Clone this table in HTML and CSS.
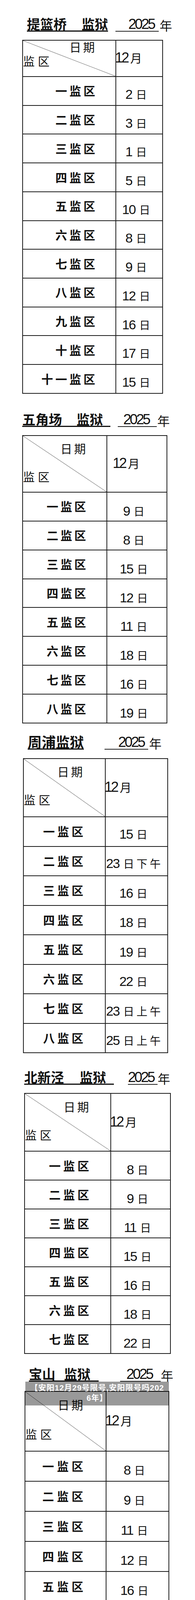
FILE: index.html
```html
<!DOCTYPE html>
<html lang="zh-CN">
<head>
<meta charset="utf-8">
<title>2025年12月 监区日期表</title>
<link rel="stylesheet" href="styles.css">
</head>
<body>

<section class="sec s1">
  <div class="ttl"><span class="nm"><span>提篮桥</span><span class="w2">监狱</span></span><span class="yr">2025</span><span class="nian">年</span></div>
  <div class="tbl">
    <div class="hl"><span class="hq">日期</span><span class="hj">监区</span></div>
    <div class="hr"><span class="m"><span class="n">12</span><span class="c">月</span></span></div>
    <div class="lab">一监区</div><div class="dt"><p class="dl"><span class="n">2</span><span class="c">日</span></p></div>
    <div class="lab">二监区</div><div class="dt"><p class="dl"><span class="n">3</span><span class="c">日</span></p></div>
    <div class="lab">三监区</div><div class="dt"><p class="dl"><span class="n">1</span><span class="c">日</span></p></div>
    <div class="lab">四监区</div><div class="dt"><p class="dl"><span class="n">5</span><span class="c">日</span></p></div>
    <div class="lab">五监区</div><div class="dt"><p class="dl"><span class="n">10</span><span class="c">日</span></p></div>
    <div class="lab">六监区</div><div class="dt"><p class="dl"><span class="n">8</span><span class="c">日</span></p></div>
    <div class="lab">七监区</div><div class="dt"><p class="dl"><span class="n">9</span><span class="c">日</span></p></div>
    <div class="lab">八监区</div><div class="dt"><p class="dl"><span class="n">12</span><span class="c">日</span></p></div>
    <div class="lab">九监区</div><div class="dt"><p class="dl"><span class="n">16</span><span class="c">日</span></p></div>
    <div class="lab">十监区</div><div class="dt"><p class="dl"><span class="n">17</span><span class="c">日</span></p></div>
    <div class="lab">十一监区</div><div class="dt"><p class="dl"><span class="n">15</span><span class="c">日</span></p></div>
  </div>
</section>

<section class="sec s2">
  <div class="ttl"><span class="nm"><span>五角场</span><span class="w2">监狱</span></span><span class="yr">2025</span><span class="nian">年</span></div>
  <div class="tbl">
    <div class="hl"><span class="hq">日期</span><span class="hj">监区</span></div>
    <div class="hr"><span class="m"><span class="n">12</span><span class="c">月</span></span></div>
    <div class="lab">一监区</div><div class="dt"><p class="dl"><span class="n">9</span><span class="c">日</span></p></div>
    <div class="lab">二监区</div><div class="dt"><p class="dl"><span class="n">8</span><span class="c">日</span></p></div>
    <div class="lab">三监区</div><div class="dt"><p class="dl"><span class="n">15</span><span class="c">日</span></p></div>
    <div class="lab">四监区</div><div class="dt"><p class="dl"><span class="n">12</span><span class="c">日</span></p></div>
    <div class="lab">五监区</div><div class="dt"><p class="dl"><span class="n">11</span><span class="c">日</span></p></div>
    <div class="lab">六监区</div><div class="dt"><p class="dl"><span class="n">18</span><span class="c">日</span></p></div>
    <div class="lab">七监区</div><div class="dt"><p class="dl"><span class="n">16</span><span class="c">日</span></p></div>
    <div class="lab">八监区</div><div class="dt"><p class="dl"><span class="n">19</span><span class="c">日</span></p></div>
  </div>
</section>

<section class="sec s3">
  <div class="ttl"><span class="nm"><span>周浦</span><span class="w2">监狱</span></span><span class="yr">2025</span><span class="nian">年</span></div>
  <div class="tbl">
    <div class="hl"><span class="hq">日期</span><span class="hj">监区</span></div>
    <div class="hr"><span class="m"><span class="n">12</span><span class="c">月</span></span></div>
    <div class="lab">一监区</div><div class="dt"><p class="dl"><span class="n">15</span><span class="c">日</span></p></div>
    <div class="lab">二监区</div><div class="dt"><p class="dl"><span class="n">23</span><span class="c">日下午</span></p></div>
    <div class="lab">三监区</div><div class="dt"><p class="dl"><span class="n">16</span><span class="c">日</span></p></div>
    <div class="lab">四监区</div><div class="dt"><p class="dl"><span class="n">18</span><span class="c">日</span></p></div>
    <div class="lab">五监区</div><div class="dt"><p class="dl"><span class="n">19</span><span class="c">日</span></p></div>
    <div class="lab">六监区</div><div class="dt"><p class="dl"><span class="n">22</span><span class="c">日</span></p></div>
    <div class="lab">七监区</div><div class="dt"><p class="dl"><span class="n">23</span><span class="c">日上午</span></p></div>
    <div class="lab">八监区</div><div class="dt"><p class="dl"><span class="n">25</span><span class="c">日上午</span></p></div>
  </div>
</section>

<section class="sec s4">
  <div class="ttl"><span class="nm"><span>北新泾</span><span class="w2">监狱</span></span><span class="yr">2025</span><span class="nian">年</span></div>
  <div class="tbl">
    <div class="hl"><span class="hq">日期</span><span class="hj">监区</span></div>
    <div class="hr"><span class="m"><span class="n">12</span><span class="c">月</span></span></div>
    <div class="lab">一监区</div><div class="dt"><p class="dl"><span class="n">8</span><span class="c">日</span></p></div>
    <div class="lab">二监区</div><div class="dt"><p class="dl"><span class="n">9</span><span class="c">日</span></p></div>
    <div class="lab">三监区</div><div class="dt"><p class="dl"><span class="n">11</span><span class="c">日</span></p></div>
    <div class="lab">四监区</div><div class="dt"><p class="dl"><span class="n">15</span><span class="c">日</span></p></div>
    <div class="lab">五监区</div><div class="dt"><p class="dl"><span class="n">16</span><span class="c">日</span></p></div>
    <div class="lab">六监区</div><div class="dt"><p class="dl"><span class="n">18</span><span class="c">日</span></p></div>
    <div class="lab">七监区</div><div class="dt"><p class="dl"><span class="n">22</span><span class="c">日</span></p></div>
  </div>
</section>

<section class="sec s5">
  <div class="ttl"><span class="nm"><span>宝山</span><span class="w2">监狱</span></span><span class="yr">2025</span><span class="nian">年</span></div>
  <div class="tbl">
    <div class="hl"><span class="hq">日期</span><span class="hj">监区</span></div>
    <div class="hr"><span class="m"><span class="n">12</span><span class="c">月</span></span></div>
    <div class="lab">一监区</div><div class="dt"><p class="dl"><span class="n">8</span><span class="c">日</span></p></div>
    <div class="lab">二监区</div><div class="dt"><p class="dl"><span class="n">9</span><span class="c">日</span></p></div>
    <div class="lab">三监区</div><div class="dt"><p class="dl"><span class="n">11</span><span class="c">日</span></p></div>
    <div class="lab">四监区</div><div class="dt"><p class="dl"><span class="n">12</span><span class="c">日</span></p></div>
    <div class="lab">五监区</div><div class="dt"><p class="dl"><span class="n">16</span><span class="c">日</span></p></div>
    <div class="lab">六监区</div><div class="dt"><p class="dl"><span class="n">10</span><span class="c">日</span></p></div>
    <div class="lab">七监区</div><div class="dt"><p class="dl"><span class="n">15</span><span class="c">日</span></p></div>
    <div class="lab">八监区</div><div class="dt"><p class="dl"><span class="n">18</span><span class="c">日</span></p></div>
    <div class="lab">九监区</div><div class="dt"><p class="dl"><span class="n">19</span><span class="c">日</span></p></div>
  </div>
  <div class="cap">【安阳12月29号限号,安阳限号吗2026年】</div>
</section>

<section class="sec s6">
  <div class="ttl"><span class="nm"><span>青浦</span><span class="w2">监狱</span></span><span class="yr">2025</span><span class="nian">年</span></div>
  <div class="tbl">
    <div class="hl"><span class="hq">日期</span><span class="hj">监区</span></div>
    <div class="hr"><span class="m"><span class="n">12</span><span class="c">月</span></span></div>
    <div class="lab">一监区</div><div class="dt"><p class="dl"><span class="n">8</span><span class="c">日</span></p></div>
    <div class="lab">二监区</div><div class="dt"><p class="dl"><span class="n">11</span><span class="c">日</span></p></div>
    <div class="lab">三监区</div><div class="dt"><p class="dl"><span class="n">16</span><span class="c">日</span></p></div>
    <div class="lab">四监区</div><div class="dt"><p class="dl"><span class="n">15</span><span class="c">日</span></p></div>
    <div class="lab">五监区</div><div class="dt"><p class="dl"><span class="n">18</span><span class="c">日</span></p></div>
    <div class="lab">六监区</div><div class="dt"><p class="dl"><span class="n">22</span><span class="c">日</span></p></div>
    <div class="lab">七监区</div><div class="dt"><p class="dl"><span class="n">9</span><span class="c">日下午</span></p></div>
    <div class="lab two">八监区</div><div class="dt two"><p class="dl"><span class="n">9</span><span class="c">日上午</span></p><p class="dl"><span class="n">23</span><span class="c">日下午</span></p></div>
    <div class="lab">九监区</div><div class="dt"><p class="dl"><span class="n">23</span><span class="c">日上午</span></p></div>
  </div>
</section>

<section class="sec s7">
  <div class="ttl"><span class="nm"><span>新收犯</span><span class="w2">监狱</span></span><span class="yr">2025</span><span class="nian">年</span></div>
  <div class="tbl">
    <div class="hl"><span class="hq">日期</span><span class="hj">监区</span></div>
    <div class="hr"><span class="m"><span class="n">12</span><span class="c">月</span></span></div>
    <div class="lab">一监区</div><div class="dt"><p class="dl"><span class="n">25</span><span class="c">日上午</span></p></div>
    <div class="lab">二监区</div><div class="dt"><p class="dl"><span class="n">25</span><span class="c">日下午</span></p></div>
    <div class="lab">三监区</div><div class="dt"><p class="dl"><span class="n">30</span><span class="c">日上午</span></p></div>
    <div class="lab">四监区</div><div class="dt"><p class="dl"><span class="n">18</span><span class="c">日上午</span></p></div>
    <div class="lab">五监区</div><div class="dt"><p class="dl"><span class="n">29</span><span class="c">日下午</span></p></div>
    <div class="lab">六监区</div><div class="dt"><p class="dl"><span class="n">29</span><span class="c">日上午</span></p></div>
    <div class="lab">七监区</div><div class="dt"><p class="dl"><span class="n">19</span><span class="c">日上午</span></p></div>
    <div class="lab">八监区</div><div class="dt"><p class="dl"><span class="n">26</span><span class="c">日上午</span></p></div>
    <div class="lab">九监区</div><div class="dt"><p class="dl"><span class="n">22</span><span class="c">日上午</span></p></div>
  </div>
</section>

<section class="sec s8">
  <div class="ttl"><span class="nm"><span>未管所</span></span><span class="yr">2025</span><span class="nian">年</span></div>
  <div class="tbl">
    <div class="hl"><span class="hq">日期</span><span class="hj">监区</span></div>
    <div class="hr"><span class="m"><span class="n">12</span><span class="c">月</span></span></div>
    <div class="lab">一管区</div><div class="dt"><p class="dl"><span class="n">12</span><span class="c">日</span></p></div>
    <div class="lab">三监区</div><div class="dt"><p class="dl"><span class="n">4</span><span class="c">日</span></p></div>
    <div class="lab">四监区</div><div class="dt"><p class="dl"><span class="n">9</span><span class="c">日</span></p></div>
    <div class="lab">五监区</div><div class="dt"><p class="dl"><span class="n">11</span><span class="c">日</span></p></div>
    <div class="lab">六监区</div><div class="dt"><p class="dl"><span class="n">16</span><span class="c">日</span></p></div>
    <div class="lab">七监区</div><div class="dt"><p class="dl"><span class="n">18</span><span class="c">日</span></p></div>
  </div>
</section>

</body>
</html>
```

FILE: styles.css
```css
html, body {
  margin: 0;
  padding: 0;
  background: #fff;
}

body {
  color: #111;
  font-family: "Noto Sans CJK SC", sans-serif;
}

/* ---------- section defaults ---------- */
.sec {
  position: relative;
  margin-top: var(--mt);
  --tf: 34px;
  --npl: 0px;
  --npr: 0px;
  --ng: 0px;
  --mx: 0px;
  --mj: flex-start;
  --lf: 30px;
  --dc: 28px;
  --dls: 6px;
}

/* ---------- title line ---------- */
.ttl {
  display: flex;
  align-items: flex-end;
  height: 40px;
  padding-left: var(--tx);
  white-space: nowrap;
}

.nm {
  display: flex;
  font-family: "Noto Sans CJK SC", sans-serif;
  font-weight: 700;
  font-size: var(--tf);
  line-height: var(--tf);
  border-bottom: 3px solid #111;
  padding-left: var(--npl);
  padding-right: var(--npr);
}

.nm .w2 {
  margin-left: var(--ng);
}

.yr {
  font-family: "Liberation Sans", sans-serif;
  font-size: 37px;
  line-height: 34px;
  letter-spacing: -4px;
  border-bottom: 2px solid #222;
  margin-left: var(--yml);
  padding-left: var(--ypl);
  padding-right: var(--ypr);
}

.nian {
  font-family: "Noto Sans CJK SC", sans-serif;
  font-size: 32px;
  line-height: 34px;
  margin-left: var(--nml);
}

/* ---------- table grid ---------- */
.tbl {
  display: grid;
  grid-template-columns: var(--c1) var(--c2);
  grid-template-rows: var(--hh);
  grid-auto-rows: minmax(var(--rh), auto);
  gap: 2px;
  padding: 2px;
  background: #1c1c1c;
  width: max-content;
  margin-top: var(--tm);
  margin-left: var(--lx);
}

.tbl > div {
  background: #fff;
  box-sizing: border-box;
}

/* header: diagonal split cell */
.tbl .hl {
  background: linear-gradient(to top right, #fff calc(50% - 0.7px), #3a3a3a 50%, #fff calc(50% + 0.7px));
  display: flex;
  flex-direction: column;
  align-items: flex-start;
  font-family: "Noto Sans CJK SC", sans-serif;
  font-size: 30px;
  line-height: 30px;
}

.hq {
  margin-top: var(--qy);
  margin-left: var(--qx);
  letter-spacing: 5px;
}

.hj {
  margin-top: var(--jg);
  letter-spacing: 8px;
}

.hr {
  display: flex;
  align-items: center;
  justify-content: var(--mj);
  padding-left: var(--mx);
  padding-bottom: 4px;
}

.hr .m {
  font-size: 30px;
  line-height: 30px;
  white-space: nowrap;
}

.hr .n {
  font-family: "Liberation Sans", sans-serif;
  font-size: 36px;
  letter-spacing: -3.5px;
  margin-left: -3px;
}

.hr .c {
  font-family: "Noto Sans CJK SC", sans-serif;
  font-size: 30px;
  margin-left: 6px;
}

/* label column */
.lab {
  display: flex;
  align-items: center;
  justify-content: flex-end;
  padding-right: var(--lp);
  padding-bottom: 3px;
  font-family: "Noto Sans CJK SC", sans-serif;
  font-weight: 700;
  font-size: var(--lf);
  line-height: 1;
  letter-spacing: var(--ls);
  white-space: nowrap;
}

/* date column */
.dt {
  display: flex;
  flex-direction: column;
  align-items: center;
  justify-content: center;
  padding-top: var(--dp);
  padding-right: 10px;
  gap: 38px;
}

.dt.two {
  min-height: 142px;
}

.dl {
  margin: 0;
  white-space: nowrap;
  line-height: 32px;
  font-size: 28px;
}

.dl .n {
  font-family: "Liberation Sans", sans-serif;
  font-size: 34px;
  letter-spacing: -2px;
}

.dl .c {
  font-family: "Noto Sans CJK SC", sans-serif;
  font-size: var(--dc);
  letter-spacing: var(--dls);
  margin-left: 10px;
}

/* caption overlay over the 宝山 table */
.cap {
  position: absolute;
  left: 65px;
  top: 40px;
  width: 368px;
  height: 61px;
  box-sizing: border-box;
  padding: 3px 12px 0;
  background: rgba(0, 0, 0, 0.4);
  color: #fff;
  font-family: "Liberation Sans", "Noto Sans CJK SC", sans-serif;
  font-weight: 700;
  font-size: 20px;
  line-height: 26px;
  letter-spacing: 1px;
  text-align: center;
  word-break: break-all;
}

/* ---------- per-section geometry ---------- */
.s1 {
  --mt: 41px; --tx: 69px;
  --ng: 38px; --npr: 0px;
  --yml: 19px; --ypl: 33px; --ypr: 12px; --nml: 2px;
  --tm: 21px; --lx: 57px; --c1: 237px; --c2: 118px; --hh: 91px; --rh: 71.73px;
  --qx: 119px; --qy: 0px; --jg: 6px;
  --lp: 46px; --ls: 6px; --dp: 16px;
}

.s2 {
  --mt: 45px; --tx: 57px;
  --ng: 37px; --npr: 19px;
  --yml: 19px; --ypl: 14px; --ypr: 20px; --nml: 1px;
  --tm: 21px; --lx: 57px; --c1: 214px; --c2: 152px; --hh: 143px; --rh: 71.9px;
  --qx: 96px; --qy: 16px; --jg: 42px; --mx: 17px;
  --lp: 47px; --ls: 5.5px; --dp: 22px;
}

.s3 {
  --mt: 27px; --tx: 71px; --tf: 36px;
  --ng: 0px; --npr: 0px;
  --yml: 53px; --ypl: 35px; --ypr: 11px; --nml: 2px;
  --tm: 22px; --lx: 59px; --c1: 208px; --c2: 158px; --hh: 147px; --rh: 73.5px;
  --qx: 86px; --qy: 16px; --jg: 42px;
  --lp: 49px; --ls: 6.5px; --dp: 12px;
}

.s4 {
  --mt: 41px; --tx: 62px;
  --ng: 40px; --npr: 20px;
  --yml: 36px; --ypl: 0px; --ypr: 10px; --nml: 0px;
  --tm: 21px; --lx: 62px; --c1: 219px; --c2: 151px; --hh: 146px; --rh: 72px;
  --qx: 99px; --qy: 17px; --jg: 42px;
  --lp: 48px; --ls: 6.5px; --dp: 20px;
}

.s5 {
  --mt: 31px; --tx: 74px;
  --ng: 22px; --npr: 21px;
  --yml: 55px; --ypl: 16px; --ypr: 22px; --nml: 0px;
  --tm: 24px; --lx: 63px; --c1: 206px; --c2: 159px; --hh: 151px; --rh: 75px;
  --qx: 83px; --qy: 17px; --jg: 45px;
  --lp: 50px; --ls: 7.5px; --dp: 18px;
}

.s6 {
  --mt: 36px; --tx: 60px;
  --ng: 21px; --npr: 21px;
  --yml: 35px; --ypl: 16px; --ypr: 21px; --nml: 1px;
  --tm: 22px; --lx: 61px; --c1: 219px; --c2: 152px; --hh: 148px; --rh: 73px;
  --qx: 99px; --qy: 17px; --jg: 43px; --mj: center;
  --lp: 48px; --ls: 6.5px; --dp: 20px;
}

.s7 {
  --mt: 47px; --tx: 64px; --tf: 36px;
  --ng: 24px; --npr: 22px;
  --yml: 20px; --ypl: 17px; --ypr: 13px; --nml: 1px;
  --tm: 22px; --lx: 64px; --c1: 206px; --c2: 163px; --hh: 157px; --rh: 78.2px;
  --qx: 77px; --qy: 17px; --jg: 49px;
  --lp: 53px; --lf: 32px; --ls: 6.5px; --dp: 18px;
  --dc: 31px; --dls: 4px;
}

.s8 {
  --mt: 26px; --tx: 68px; --tf: 35px;
  --npl: 19px; --npr: 21px;
  --yml: 37px; --ypl: 15px; --ypr: 23px; --nml: 1px;
  --tm: 24px; --lx: 68px; --c1: 226px; --c2: 154px; --hh: 148px; --rh: 74.33px;
  --qx: 105px; --qy: 15px; --jg: 46px;
  --lp: 49px; --ls: 7px; --dp: 22px;
}
```
